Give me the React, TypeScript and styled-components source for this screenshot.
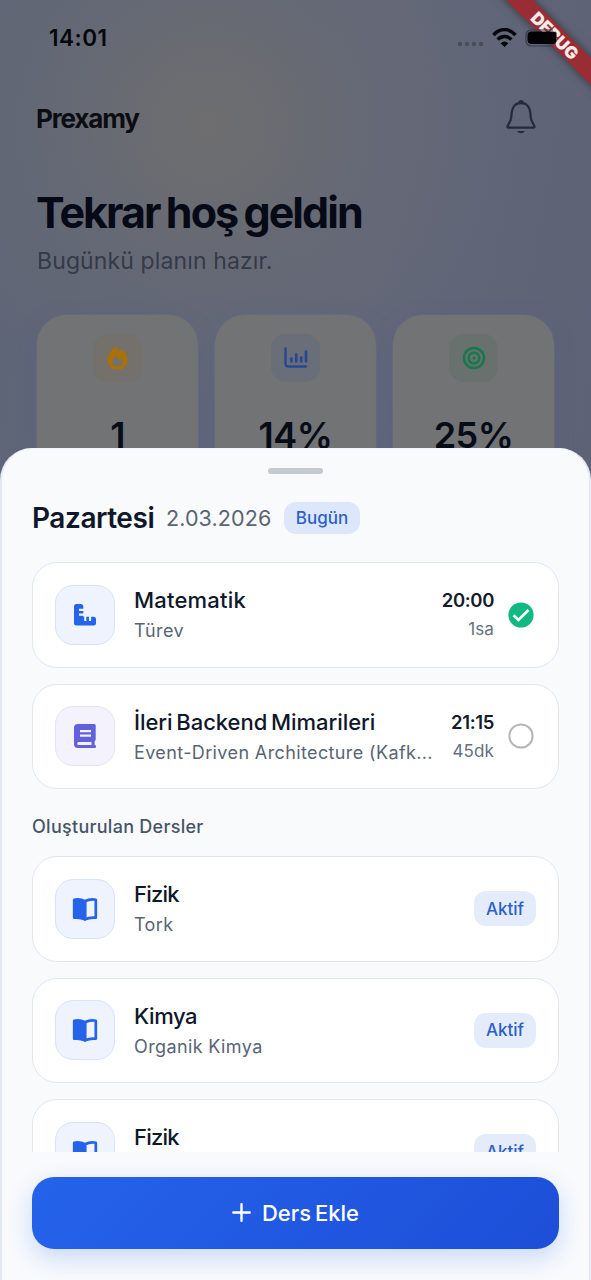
import React from "react";
import styled, { createGlobalStyle } from "styled-components";

const GlobalStyle = createGlobalStyle`
  *, *::before, *::after { box-sizing: border-box; }
  body { margin: 0; font-family: Inter, "Noto Sans", sans-serif; }
`;

const Screen = styled.main`
  position: relative;
  width: 591px;
  height: 1280px;
  overflow: hidden;
  background:
    radial-gradient(circle at 208px 125px, #6e6e6f 0, #6b6c71 60px, rgba(103, 106, 116, 0.7) 150px, rgba(96, 101, 117, 0) 300px),
    linear-gradient(100deg, #5d6576 0%, #626779 50%, #5b5f73 100%);
`;

const StatusBar = styled.header`
  display: flex;
  align-items: center;
  justify-content: space-between;
  height: 76px;
  padding: 0 32px 0 49px;
`;

const Clock = styled.time`
  padding-bottom: 1px;
  font-size: 22.5px;
  font-weight: 600;
  letter-spacing: 0.5px;
  color: #05070c;
`;

const StatusIcons = styled.div`
  position: relative;
  z-index: 2;
  display: flex;
  align-items: center;
  height: 24px;
`;

const Ribbon = styled.div`
  position: absolute;
  z-index: 1;
  top: 26px;
  left: 480px;
  width: 150px;
  height: 19px;
  display: flex;
  align-items: center;
  justify-content: center;
  transform: rotate(45deg);
  background: #9a2c34;
  box-shadow: 0 0 9px rgba(20, 30, 35, 0.6);
  color: #f3eaea;
  font-size: 17px;
  font-weight: 900;
  letter-spacing: 0;
`;

const AppBar = styled.div`
  display: flex;
  align-items: center;
  justify-content: space-between;
  height: 84px;
  padding: 0 52px 0 36px;
`;

const Brand = styled.div`
  font-size: 26px;
  font-weight: 700;
  letter-spacing: -1.15px;
  color: #0b0d12;
`;

const Welcome = styled.section`
  padding: 25px 37px 0;
`;

const Greeting = styled.h1`
  margin: 0 0 0 -1px;
  font-size: 43px;
  line-height: 54px;
  font-weight: 650;
  letter-spacing: -1.95px;
  word-spacing: -2px;
  color: #060a17;
`;

const Plan = styled.p`
  margin: 7px 0 0;
  font-size: 23px;
  line-height: 30px;
  letter-spacing: 0.12px;
  color: #343a48;
`;

const Stats = styled.section`
  display: grid;
  grid-template-columns: repeat(3, 161px);
  gap: 17px;
  padding: 39px 37px 0;
`;

const Stat = styled.article`
  display: flex;
  flex-direction: column;
  align-items: center;
  gap: 31px;
  height: 210px;
  padding: 19px 0 0;
  border-radius: 30px;
  background: #717374;
  box-shadow: 0 4px 18px rgba(88, 98, 146, 0.42), 0 0 0 1px rgba(125, 128, 135, 0.2);
`;

const StatIcon = styled.div<{ $tint: string }>`
  display: grid;
  place-items: center;
  width: 49px;
  height: 48px;
  border-radius: 15px;
  background: ${(p) => p.$tint};
`;

const StatValue = styled.strong`
  font-size: 36px;
  line-height: 44px;
  font-weight: 600;
  letter-spacing: -0.5px;
  color: #080c17;
`;

const Sheet = styled.section`
  position: absolute;
  z-index: 3;
  inset: 448px 0 0;
  display: flex;
  flex-direction: column;
  border: 2px solid #e4e8f2;
  border-top: 1px solid #f3f5f9;
  border-bottom: 0;
  border-radius: 32px 32px 0 0;
  background: #f8fafc;
`;

const Handle = styled.div`
  flex: none;
  align-self: center;
  width: 55px;
  height: 6px;
  margin-top: 19px;
  border-radius: 3px;
  background: #c3cad0;
`;

const DayHeader = styled.header`
  display: flex;
  align-items: center;
  flex: none;
  height: 32px;
  margin: 28px 30px 0;
`;

const Day = styled.h2`
  width: 134px;
  margin: 0;
  font-size: 28px;
  font-weight: 600;
  letter-spacing: -0.45px;
  color: #0f172a;
`;

const DayDate = styled.span`
  width: 118px;
  font-size: 21.5px;
  letter-spacing: 0.1px;
  color: #596474;
`;

const Badge = styled.span<{ $large?: boolean }>`
  display: grid;
  place-items: center;
  flex: none;
  width: ${(p) => (p.$large ? 76 : 62)}px;
  height: ${(p) => (p.$large ? 32 : 35)}px;
  padding-bottom: ${(p) => (p.$large ? 1 : 0)}px;
  border-radius: 12px;
  background: ${(p) => (p.$large ? "#dde7fb" : "#e4ecfc")};
  color: #2c5fc9;
  font-size: 17px;
  font-weight: 500;
`;

const Lessons = styled.div`
  display: flex;
  flex-direction: column;
  flex: none;
  gap: 16px;
  height: 590px;
  margin-top: 28px;
  padding: 0 30px;
  overflow: hidden;
`;

const Lesson = styled.article`
  display: flex;
  align-items: center;
  flex: none;
  height: 105.5px;
  padding: 0 22px;
  border: 1px solid #e2e6ee;
  border-radius: 25px;
  background: #fff;
`;

const Tile = styled.div<{ $violet?: boolean }>`
  display: grid;
  place-items: center;
  flex: none;
  width: 60px;
  height: 60px;
  margin-right: 19px;
  border: 1px solid ${(p) => (p.$violet ? "#e4e3f8" : "#d7e3fa")};
  border-radius: 18px;
  background: ${(p) => (p.$violet ? "#f3f2fd" : "#eef3fd")};
  color: ${(p) => (p.$violet ? "#6260dd" : "#2563eb")};
`;

const LessonText = styled.div`
  flex: 1;
  min-width: 0;
  padding-top: 3px;
`;

const LessonTitle = styled.h3<{ $spacing: number }>`
  margin: 0;
  font-size: 22px;
  line-height: 29px;
  font-weight: 500;
  letter-spacing: ${(p) => p.$spacing}px;
  word-spacing: -2px;
  white-space: nowrap;
  color: #0f172a;
`;

const Topic = styled.p`
  height: 30px;
  margin: 1px 0 0;
  font-size: 18px;
  line-height: 30px;
  letter-spacing: 0.38px;
  white-space: nowrap;
  color: #596474;
`;

const Schedule = styled.div`
  margin: 1px 14px 0 16px;
  text-align: right;
`;

const StartTime = styled.div`
  font-size: 18.5px;
  line-height: 29px;
  font-weight: 600;
  letter-spacing: -0.35px;
  color: #151b2b;
`;

const Duration = styled.div`
  font-size: 17px;
  line-height: 29px;
  letter-spacing: 0.1px;
  color: #657080;
`;

const GroupLabel = styled.h4`
  flex: none;
  height: 35px;
  margin: 0;
  font-size: 18px;
  line-height: 44px;
  font-weight: 500;
  letter-spacing: 0.28px;
  color: #475569;
`;

const Footer = styled.footer`
  padding: 24.5px 30px 0;
`;

const AddButton = styled.button`
  display: flex;
  align-items: center;
  justify-content: center;
  gap: 11px;
  width: 100%;
  height: 72.5px;
  padding: 0;
  border: 0;
  border-radius: 22px;
  background: linear-gradient(135deg, #2563eb, #1d4ed8);
  box-shadow: 0 9px 24px rgba(37, 99, 235, 0.22);
  color: #fff;
  font: 500 22px Inter, sans-serif;
  word-spacing: -2px;
`;

const WifiIcon = styled.svg`
  margin-left: 8px;
`;

const BatteryIcon = styled.svg`
  margin-left: 8px;
`;

const StateIcon = styled.svg`
  flex: none;
  margin-right: 2px;
`;

const Signal = () => (
  <svg width="27" height="24" viewBox="0 0 27 24" fill="#474d5b">
    {[3, 10, 17, 24].map((x) => <circle key={x} cx={x} cy="18" r="2.2" />)}
  </svg>
);

const Wifi = () => (
  <WifiIcon width="25" height="20" viewBox="0 0 25 20" fill="none" stroke="#05070b">
    <path d="M1.5 7C8-.2 17-.2 23.5 7" strokeWidth="3.5" />
    <path d="M5.6 11.500c4-4 9.800-4 13.800 0" strokeWidth="3.3" />
    <path d="M12.500 19 8.600 15.200q3.900-3.400 7.800 0z" fill="#05070b" stroke="none" />
  </WifiIcon>
);

const Battery = () => (
  <BatteryIcon width="34" height="18" viewBox="0 0 34 18">
    <path d="M28 1H6a5 5 0 0 0-5 5v6a5 5 0 0 0 5 5h22" fill="none" stroke="#373c49" strokeWidth="1.2" />
    <rect x="2.500" y="2.500" width="29" height="12.500" rx="4" fill="#020305" />
  </BatteryIcon>
);

const Bell = () => (
  <svg width="36" height="38" viewBox="0 0 36 38" fill="none" stroke="#252b3a" strokeWidth="2.3" strokeLinejoin="round">
    <path d="M18 4C12.500 4 9.200 8 8.700 13.500L8.200 18.500C7.800 22.500 5.600 24.500 4.600 27.200C4.300 28.100 4.600 28.600 5.300 28.600H30.700C31.400 28.600 31.700 28.100 31.400 27.200C30.400 24.500 28.200 22.500 27.800 18.500L27.300 13.500C26.800 8 23.500 4 18 4Z" />
    <path d="M16.500 3.700c0-2 3-2 3 0" />
    <path d="M14.300 32h7.400c-1 3-6.400 3-7.400 0Z" fill="#252b3a" stroke="none" />
  </svg>
);

const FlameIcon = () => (
  <svg width="21" height="24" viewBox="0 0 21 24" fill="#ac7009" fillRule="evenodd">
    <path d="M8.300.4C10.200 2 11.600 3.700 12.700 5.300L14.700 3.200C18 5.800 20.600 10 20.600 13.700C20.600 19.600 16.200 23.700 10.500 23.700S.4 19.600.4 13.700C.4 9.600 4.200 4.200 8.300.4ZM9.300 9.600C6.700 12.300 5.300 14.500 5.300 16.300C5.300 18.900 7.500 20.300 10.500 20.300S15.800 18.700 15.800 16C15.800 14.600 15.200 13.200 14.600 12.300L12.800 14.200Z" />
  </svg>
);

const ChartIcon = () => (
  <svg width="24" height="24" viewBox="0 0 24 24" fill="none" stroke="#244796" strokeWidth="2.3" strokeLinecap="round">
    <path d="M1.500 2.500V17.500Q1.500 20.500 4.500 20.500H22" />
    <path d="M7.300 12.500v3M12.200 8.500v7M17.200 11.500v4M22 5.500v10" strokeWidth="2.700" />
  </svg>
);

const TargetIcon = () => (
  <svg width="24" height="24" viewBox="0 0 24 24" fill="none" stroke="#16784f" strokeWidth="2.500">
    <circle cx="12" cy="12" r="10" />
    <circle cx="12" cy="12" r="5.300" />
    <circle cx="12" cy="12" r="1.500" fill="#16784f" stroke="none" />
  </svg>
);

const RulerIcon = () => (
  <svg width="22" height="22" viewBox="0 0 22 22" fill="currentColor">
    <path d="M2.500 0H6.800Q9.300 0 9.300 2.500V4.700H5V6.900H9.300V9.600H5V11.800H9.300V12.700H10.200V17H12.300V12.700H15V17H17.100V12.700H19.500Q22 12.700 22 15.200V19Q22 21.500 19.500 21.500H2.500Q0 21.500 0 19V2.500Q0 0 2.500 0Z" />
  </svg>
);

const BookIcon = () => (
  <svg width="22" height="24" viewBox="0 0 22 24" fill="currentColor" fillRule="evenodd">
    <path d="M4 0H20.300Q21.700 0 21.700 1.500V15.500Q21.700 16.800 20.600 17.100V21H21.200Q22 21 22 22.500T21.200 24H4Q0 24 0 20V4Q0 0 4 0ZM6 6V8.300H17V6ZM6 10.500V12.800H17V10.500ZM4.700 18Q3.200 18 3.200 19.500T4.700 21H17.500V18Z" />
  </svg>
);

const OpenBook = () => (
  <svg width="26" height="26" viewBox="0 0 26 26" fill="none" stroke="currentColor" strokeWidth="2.700" strokeLinejoin="round">
    <path d="M13 5.300Q8 2.500 2.200 3.700V21.700Q8 21 13 23.300Z" fill="currentColor" />
    <path d="M13 5.300Q18 2.500 23.800 3.700V21.700Q18 21 13 23.300Z" />
  </svg>
);

const Status = ({ done }: { done: boolean }) => (
  <StateIcon width="26" height="26" viewBox="0 0 26 26" fill="none">
    <circle cx="13" cy="13" r={done ? 12.6 : 11.6} fill={done ? "#10b981" : "none"} stroke={done ? "none" : "#b4b6b8"} strokeWidth="2" />
    {done && <path d="m5.500 13.300 5 4.700L20.500 8" stroke="#fff" strokeWidth="2.600" />}
  </StateIcon>
);

const Plus = () => (
  <svg width="19" height="20" viewBox="0 0 19 20" stroke="currentColor" strokeWidth="2.400" strokeLinecap="round">
    <path d="M9.500 1.300v16.400M1.300 9.500h16.400" />
  </svg>
);

const planned = [
  { title: "Matematik", topic: "Türev", time: "20:00", length: "1sa", done: true, spacing: 0.2 },
  { title: "İleri Backend Mimarileri", topic: "Event-Driven Architecture (Kafk...", time: "21:15", length: "45dk", done: false, spacing: -0.05 },
];

const created = [
  { title: "Fizik", topic: "Tork", spacing: -0.8 },
  { title: "Kimya", topic: "Organik Kimya", spacing: -0.4 },
  { title: "Fizik", topic: "", spacing: -0.8 },
];

export default function App() {
  return (
    <Screen>
      <GlobalStyle />
      <StatusBar>
        <Clock>14:01</Clock>
        <StatusIcons><Signal /><Wifi /><Battery /></StatusIcons>
      </StatusBar>
      <Ribbon>DEBUG</Ribbon>
      <AppBar><Brand>Prexamy</Brand><Bell /></AppBar>
      <Welcome>
        <Greeting>Tekrar hoş geldin</Greeting>
        <Plan>Bugünkü planın hazır.</Plan>
      </Welcome>
      <Stats>
        <Stat><StatIcon $tint="#74706c"><FlameIcon /></StatIcon><StatValue>1</StatValue></Stat>
        <Stat><StatIcon $tint="#6a6e78"><ChartIcon /></StatIcon><StatValue>14%</StatValue></Stat>
        <Stat><StatIcon $tint="#69716f"><TargetIcon /></StatIcon><StatValue>25%</StatValue></Stat>
      </Stats>
      <Sheet>
        <Handle />
        <DayHeader>
          <Day>Pazartesi</Day>
          <DayDate>2.03.2026</DayDate>
          <Badge $large>Bugün</Badge>
        </DayHeader>
        <Lessons>
          {planned.map((item) => (
            <Lesson key={item.title}>
              <Tile $violet={!item.done}>{item.done ? <RulerIcon /> : <BookIcon />}</Tile>
              <LessonText>
                <LessonTitle $spacing={item.spacing}>{item.title}</LessonTitle>
                <Topic>{item.topic}</Topic>
              </LessonText>
              <Schedule>
                <StartTime>{item.time}</StartTime>
                <Duration>{item.length}</Duration>
              </Schedule>
              <Status done={item.done} />
            </Lesson>
          ))}
          <GroupLabel>Oluşturulan Dersler</GroupLabel>
          {created.map((item, index) => (
            <Lesson key={index}>
              <Tile><OpenBook /></Tile>
              <LessonText>
                <LessonTitle $spacing={item.spacing}>{item.title}</LessonTitle>
                <Topic>{item.topic}</Topic>
              </LessonText>
              <Badge>Aktif</Badge>
            </Lesson>
          ))}
        </Lessons>
        <Footer><AddButton><Plus />Ders Ekle</AddButton></Footer>
      </Sheet>
    </Screen>
  );
}
